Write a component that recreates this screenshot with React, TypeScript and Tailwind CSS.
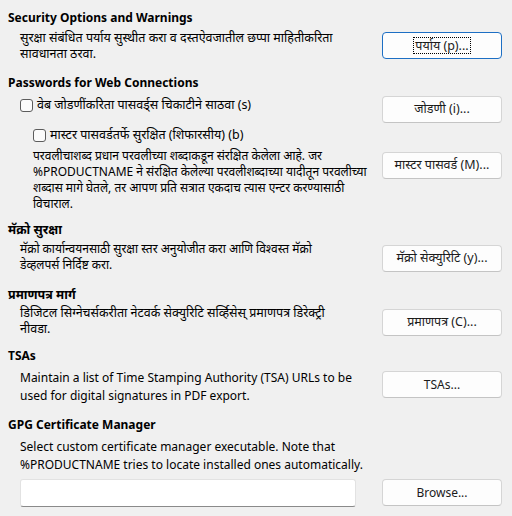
import React from 'react';

const font = { fontFamily: '"Noto Sans", "Open Sans", "Noto Sans Devanagari", sans-serif' };

function Btn({ label, focused = false, dev = false }: { label: string; focused?: boolean; dev?: boolean }) {
  return (
    <button
      className={`w-[120px] h-[27px] shrink-0 rounded-[4px] bg-[#fdfdfd] text-[#1b1b1b] flex items-center justify-center border ${
        dev ? 'text-[12.5px]' : 'text-[12px]'
      } ${focused ? 'border-[#1d6fc4]' : 'border-[#d5d5d5] border-b-[#c4c4c4]'}`}
    >
      <span className={focused ? 'outline outline-1 outline-dotted outline-black px-[1px] leading-[15px]' : ''}>{label}</span>
    </button>
  );
}

function Heading({ children, className = '' }: { children: React.ReactNode; className?: string }) {
  return <div className={`font-bold leading-[16px] ${className}`}>{children}</div>;
}

function CheckBox() {
  return <span className="inline-block w-[13px] h-[13px] rounded-[3px] border border-[#5c5c5c] bg-[#fbfbfb] shrink-0" />;
}

export default function App() {
  return (
    <div style={font} className="w-[512px] h-[516px] bg-[#f0f0f0] text-black text-[12px] pl-[8px] pr-[10px] pt-[10px] overflow-hidden">
      <Heading className="text-[12px]">Security Options and Warnings</Heading>
      <div className="flex justify-between items-start mt-[4px]">
        <p className="pl-[12px] leading-[16px] text-[12.5px]">
          सुरक्षा संबंधित पर्याय सुस्थीत करा व दस्तऐवजातील छप्पा माहितीकरिता
          <br />
          सावधानता ठरवा.
        </p>
        <div className="mt-[2px]">
          <Btn label="पर्याय (p)..." focused dev />
        </div>
      </div>

      <Heading className="mt-[13px] text-[12px]">Passwords for Web Connections</Heading>
      <div className="flex justify-between items-start mt-[5px]">
        <div className="pl-[12px] text-[12.5px]">
          <label className="flex items-center gap-[4px] h-[18px]">
            <CheckBox />
            <span>वेब जोडणींकरिता पासवर्ड्स चिकाटीने साठवा (s)</span>
          </label>
          <label className="flex items-center gap-[4px] h-[18px] mt-[12px] pl-[13px]">
            <CheckBox />
            <span>मास्टर पासवर्डतर्फे सुरक्षित (शिफारसीय) (b)</span>
          </label>
        </div>
        <Btn label="जोडणी (i)..." dev />
      </div>
      <div className="flex justify-between items-start mt-[4px]">
        <p className="pl-[25px] leading-[16px] text-[12px]">
          परवलीचाशब्द प्रधान परवलीच्या शब्दाकडून संरक्षित केलेला आहे. जर
          <br />
          %PRODUCTNAME ने संरक्षित केलेल्या परवलीशब्दाच्या यादीतून परवलीच्या
          <br />
          शब्दास मागे घेतले, तर आपण प्रति सत्रात एकदाच त्यास एन्टर करण्यासाठी
          <br />
          विचाराल.
        </p>
        <div className="mt-[4px]">
          <Btn label="मास्टर पासवर्ड (M)..." dev />
        </div>
      </div>

      <Heading className="mt-[10px] text-[12.5px]">मॅक्रो सुरक्षा</Heading>
      <div className="flex justify-between items-start mt-[3px]">
        <p className="pl-[12px] leading-[16px] text-[12px]">
          मॅक्रो कार्यान्वयनसाठी सुरक्षा स्तर अनुयोजीत करा आणि विश्वस्त मॅक्रो
          <br />
          डेव्हलपर्स निर्दिष्ट करा.
        </p>
        <div className="mt-[4px]">
          <Btn label="मॅक्रो सेक्युरिटि (y)..." dev />
        </div>
      </div>

      <Heading className="mt-[14px] text-[12.5px]">प्रमाणपत्र मार्ग</Heading>
      <div className="flex justify-between items-start mt-[2px]">
        <p className="pl-[12px] leading-[16px] text-[12.5px]">
          डिजिटल सिग्नेचर्सकरीता नेटवर्क सेक्युरिटि सर्व्हिसेस् प्रमाणपत्र डिरेक्ट्री
          <br />
          नीवडा.
        </p>
        <div className="mt-[4px]">
          <Btn label="प्रमाणपत्र (C)..." dev />
        </div>
      </div>

      <Heading className="mt-[11px] text-[12px]">TSAs</Heading>
      <div className="flex justify-between items-start mt-[5px]">
        <p className="pl-[12px] leading-[18px]">
          Maintain a list of Time Stamping Authority (TSA) URLs to be
          <br />
          used for digital signatures in PDF export.
        </p>
        <div className="mt-[2px]">
          <Btn label="TSAs..." />
        </div>
      </div>

      <Heading className="mt-[12px] text-[12px]">GPG Certificate Manager</Heading>
      <p className="pl-[12px] leading-[18px] mt-[5px]">
        Select custom certificate manager executable. Note that
        <br />
        %PRODUCTNAME tries to locate installed ones automatically.
      </p>
      <div className="flex justify-between items-start mt-[5px]">
        <input
          type="text"
          className="ml-[12px] w-[336px] h-[28px] bg-white border border-[#e2e2e2] border-b-[#8a8a8a] rounded-[3px] outline-none px-2"
        />
        <Btn label="Browse..." />
      </div>
    </div>
  );
}
